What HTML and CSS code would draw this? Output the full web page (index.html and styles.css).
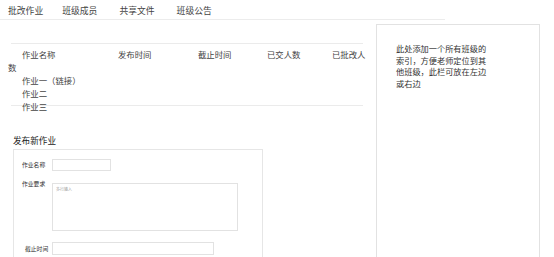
FILE: index.html
```html
<!DOCTYPE html>
<html lang="zh-CN">
<head>
<meta charset="utf-8">
<link rel="stylesheet" href="styles.css">
</head>
<body>
  <nav class="topnav">
    <span class="nav-item">批改作业</span>
    <span class="nav-item">班级成员</span>
    <span class="nav-item">共享文件</span>
    <span class="nav-item">班级公告</span>
  </nav>

  <div class="page">
    <section class="main">
      <div class="rule"></div>
      <div class="task-head">
        <span class="col col-name">作业名称</span>
        <span class="col col-pub">发布时间</span>
        <span class="col col-end">截止时间</span>
        <span class="col col-sub">已交人数</span>
        <span class="col">已批改人</span>
      </div>
      <div class="task-wrap">数</div>
      <div class="task-list">
        <div class="task">作业一（链接）</div>
        <div class="task">作业二</div>
        <div class="task">作业三</div>
      </div>
      <div class="rule rule-over"></div>

      <h3 class="form-title">发布新作业</h3>
      <form class="publish">
        <div class="field">
          <label>作业名称</label>
          <input type="text" class="input-name">
        </div>
        <div class="field field-top">
          <label>作业要求</label>
          <textarea placeholder="多行输入"></textarea>
        </div>
        <div class="field field-date">
          <label>截止时间</label>
          <input type="text" class="input-date">
        </div>
      </form>
    </section>

    <aside class="side">
      <p class="side-text">此处添加一个所有班级的索引，方便老师定位到其他班级，此栏可放在左边或右边</p>
    </aside>
  </div>
</body>
</html>
```

FILE: styles.css
```css
* {
    margin: 0;
    padding: 0;
    box-sizing: border-box;
}
body
{
    font-family: "Noto Sans CJK SC", "Noto Sans", sans-serif;
    color: #444;
    background: #fff;
}
.topnav
{
    display: flex;
    gap: 22px;
    width: 445px;
    padding: 4px 0 2px 8px;
    line-height: 13px;
    font-size: 8.8px;
    border-bottom: 1px solid #ececec;
}
.nav-item
{
    color: #444;
}
.nav-item:first-child
{
    margin-right: -3px;
}
.page
{
    display: flex;
    align-items: flex-start;
}
.main
{
    width: 364px;
    margin-left: 8px;
    font-size: 8.4px;
    line-height: 13px;
}
.rule
{
    height: 1px;
    margin: 23px 9px 0 3px;
    background: #ebebeb;
}
.rule-over
{
    margin-top: -8px;
}
.task-head
{
    display: flex;
    margin-top: 4px;
    padding-left: 14px;
}
.col-name { width: 96px; }
.col-pub { width: 80px; }
.col-end { width: 69px; }
.col-sub { width: 65px; }
.task
{
    padding-left: 14px;
}
.form-title
{
    margin: 28px 0 2px 5px;
    font-size: 8.6px;
    font-weight: normal;
    line-height: 13px;
    color: #222;
}
.publish
{
    width: 250px;
    height: 110px;
    margin-left: 5px;
    padding: 9px 0 0 8px;
    border: 1px solid #e6e6e6;
    border-bottom: none;
}
.field
{
    display: flex;
    align-items: center;
    margin-bottom: 12px;
}
.field-top
{
    align-items: flex-start;
    margin-bottom: 11px;
}
.field label
{
    width: 30px;
    font-size: 5.8px;
    line-height: 8px;
    color: #333;
}
.field-top label
{
    margin-top: -3px;
}
.field-date label
{
    padding-left: 3px;
}
.field input,
.field textarea
{
    border: 1px solid #e2e2e2;
    background: #fff;
    outline: none;
}
.input-name
{
    width: 59px;
    height: 12px;
}
.input-date
{
    width: 162px;
    height: 13px;
}
textarea
{
    width: 186px;
    height: 48px;
    padding: 2px 3px;
    resize: none;
    font-family: "Noto Sans CJK SC", sans-serif;
    font-size: 4px;
    line-height: 6px;
}
textarea::placeholder
{
    color: #999;
}
.side
{
    width: 164px;
    height: 233px;
    margin: 4px 0 0 4px;
    padding: 18px 0 0 19px;
    border: 1px solid #e2e2e2;
    border-bottom: none;
}
.side-text
{
    width: 92px;
    font-size: 8.2px;
    line-height: 11.7px;
    color: #333;
}
```
